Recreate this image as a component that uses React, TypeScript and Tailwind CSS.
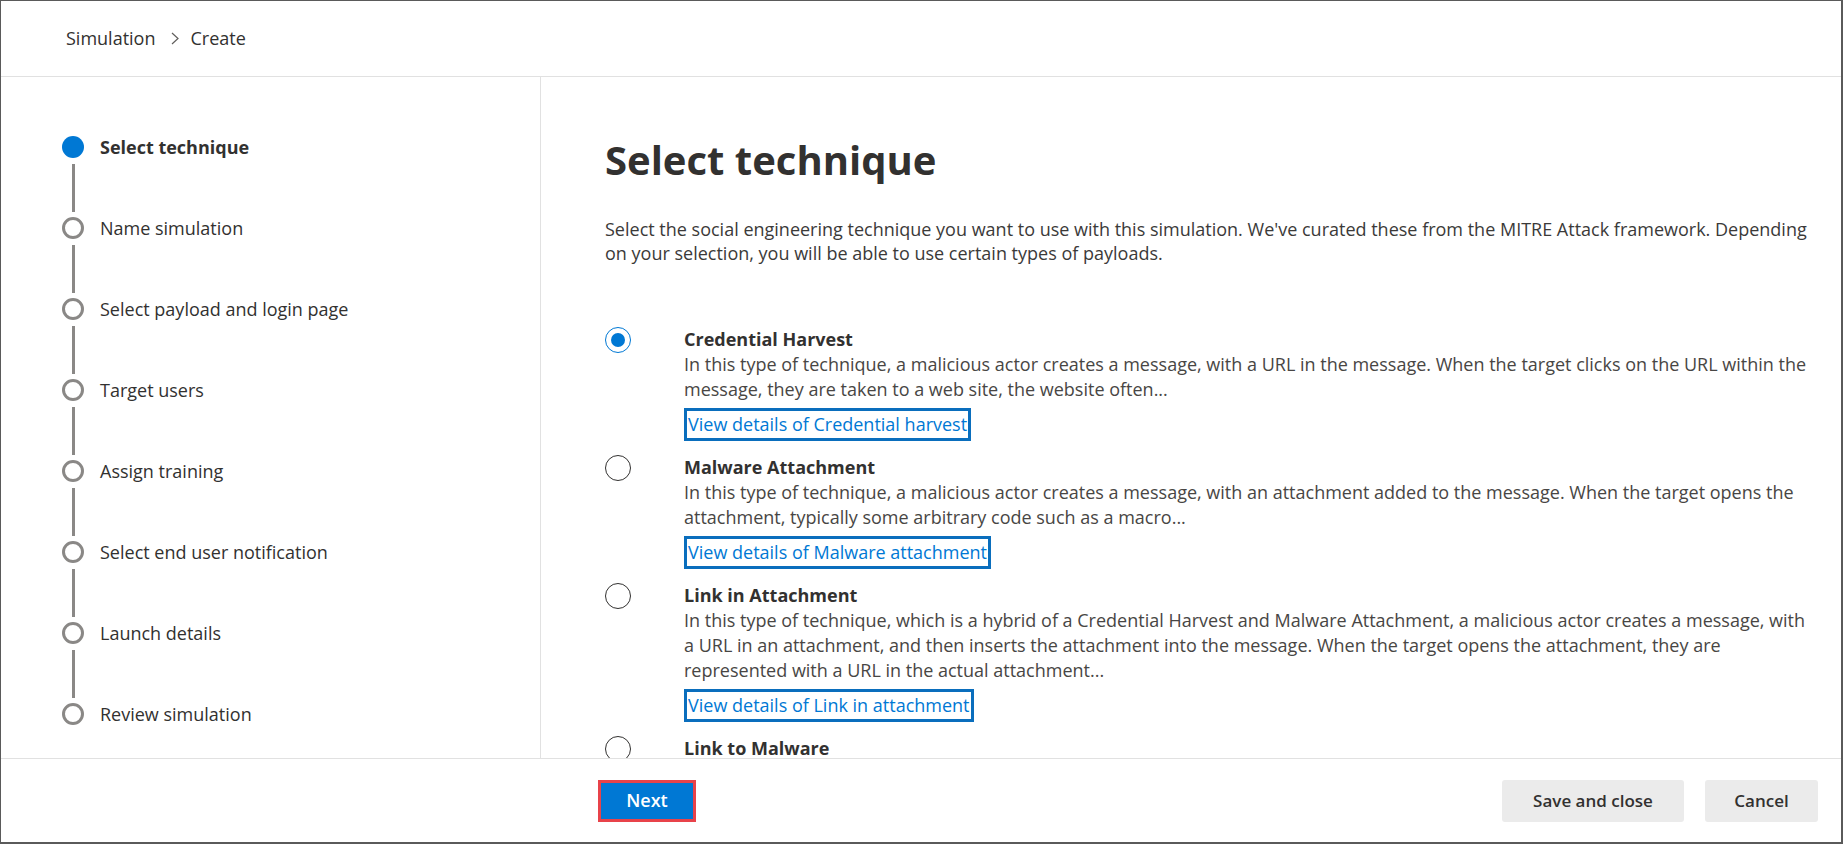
import React from "react";

const steps = [
  "Select technique",
  "Name simulation",
  "Select payload and login page",
  "Target users",
  "Assign training",
  "Select end user notification",
  "Launch details",
  "Review simulation",
];

const options = [
  {
    title: "Credential Harvest",
    lines: [
      "In this type of technique, a malicious actor creates a message, with a URL in the message. When the target clicks on the URL within the",
      "message, they are taken to a web site, the website often...",
    ],
    link: "View details of Credential harvest",
    selected: true,
  },
  {
    title: "Malware Attachment",
    lines: [
      "In this type of technique, a malicious actor creates a message, with an attachment added to the message. When the target opens the",
      "attachment, typically some arbitrary code such as a macro...",
    ],
    link: "View details of Malware attachment",
  },
  {
    title: "Link in Attachment",
    lines: [
      "In this type of technique, which is a hybrid of a Credential Harvest and Malware Attachment, a malicious actor creates a message, with",
      "a URL in an attachment, and then inserts the attachment into the message. When the target opens the attachment, they are",
      "represented with a URL in the actual attachment...",
    ],
    link: "View details of Link in attachment",
  },
  {
    title: "Link to Malware",
    lines: [
      "In this type of technique, a malicious actor creates a message, with an attachment hosted on a file sharing service.",
    ],
    link: "View details of Link to malware",
  },
];

export default function App() {
  return (
    <div
      className="h-[844px] w-full flex flex-col bg-white text-[#323130] border-l border-t border-r-2 border-b-2 border-[#5a5a5a] overflow-hidden"
      style={{ fontFamily: "'Open Sans', 'Noto Sans', sans-serif" }}
    >
      {/* HEADER */}
      <div className="h-[76px] shrink-0 flex items-center pl-[65px] border-b border-[#e1e1e1] text-[18px]">
        <span>Simulation</span>
        <svg width="8" height="13" viewBox="0 0 8 13" className="ml-[15px] mr-[12px]">
          <path d="M1 1 L7 6.5 L1 12" fill="none" stroke="#605e5c" strokeWidth="1.2" />
        </svg>
        <span>Create</span>
      </div>

      {/* MAIN */}
      <div className="flex-1 min-h-0 flex">
        {/* STEPS */}
        <div className="w-[540px] shrink-0 border-r border-[#e1e1e1] pl-[61px] pt-[59px]">
          {steps.map((s, i) => (
            <div key={s}>
              <div className="flex items-center h-[22px]">
                {i === 0 ? (
                  <div className="w-[22px] h-[22px] rounded-full bg-[#0078d4] shrink-0" />
                ) : (
                  <div className="w-[22px] h-[22px] rounded-full border-[3px] border-[#8a8886] shrink-0" />
                )}
                <span
                  className={
                    "ml-[16px] text-[18px] leading-[22px] whitespace-nowrap " +
                    (i === 0 ? "font-bold" : "")
                  }
                >
                  {s}
                </span>
              </div>
              {i < steps.length - 1 && (
                <div className="ml-[10px] w-[3px] h-[48px] mt-[6px] mb-[5px] bg-[#8a8886]" />
              )}
            </div>
          ))}
        </div>

        {/* CONTENT */}
        <div className="flex-1 min-w-0 overflow-hidden pl-[64px] pr-[34px] pt-[59px]">
          <h1 className="text-[40px] leading-[48px] font-bold text-[#323130]">
            Select technique
          </h1>
          <div className="mt-[33px] text-[18px] leading-[24px] text-[#3b3a39] whitespace-nowrap">
            <p>
              Select the social engineering technique you want to use with this simulation. We've curated these from the MITRE Attack framework. Depending
            </p>
            <p>on your selection, you will be able to use certain types of payloads.</p>
          </div>

          <div className="mt-[62px] flex flex-col gap-[14px]">
            {options.map((o) => (
              <div key={o.title} className="flex">
                {o.selected ? (
                  <div className="w-[26px] h-[26px] rounded-full border border-[#0078d4] flex items-center justify-center shrink-0">
                    <div className="w-[14px] h-[14px] rounded-full bg-[#0078d4]" />
                  </div>
                ) : (
                  <div className="w-[26px] h-[26px] rounded-full border border-[#323130] shrink-0" />
                )}
                <div className="ml-[53px] min-w-0">
                  <div className="text-[18px] leading-[25px] font-bold text-[#323130]">
                    {o.title}
                  </div>
                  {o.lines.map((l) => (
                    <div key={l} className="text-[18px] leading-[25px] text-[#484644] whitespace-nowrap">
                      {l}
                    </div>
                  ))}
                  <a className="inline-block mt-[6px] border-[3px] border-[#0a6ebd] px-[1px] text-[18px] leading-[27px] text-[#0078d4] whitespace-nowrap">
                    {o.link}
                  </a>
                </div>
              </div>
            ))}
          </div>
        </div>
      </div>

      {/* FOOTER */}
      <div className="h-[84px] shrink-0 border-t border-[#e1e1e1] flex items-center pr-[23px]">
        <div className="w-[597px] shrink-0" />
        <button className="w-[98px] h-[42px] bg-[#0078d4] border-[3px] border-[#e8434a] text-white text-[18px] font-semibold">
          Next
        </button>
        <div className="ml-auto flex gap-[21px]">
          <button className="w-[182px] h-[42px] rounded-[3px] bg-[#ebebeb] text-[17px] font-semibold text-[#323130]">
            Save and close
          </button>
          <button className="w-[113px] h-[42px] rounded-[3px] bg-[#ebebeb] text-[17px] font-semibold text-[#323130]">
            Cancel
          </button>
        </div>
      </div>
    </div>
  );
}
